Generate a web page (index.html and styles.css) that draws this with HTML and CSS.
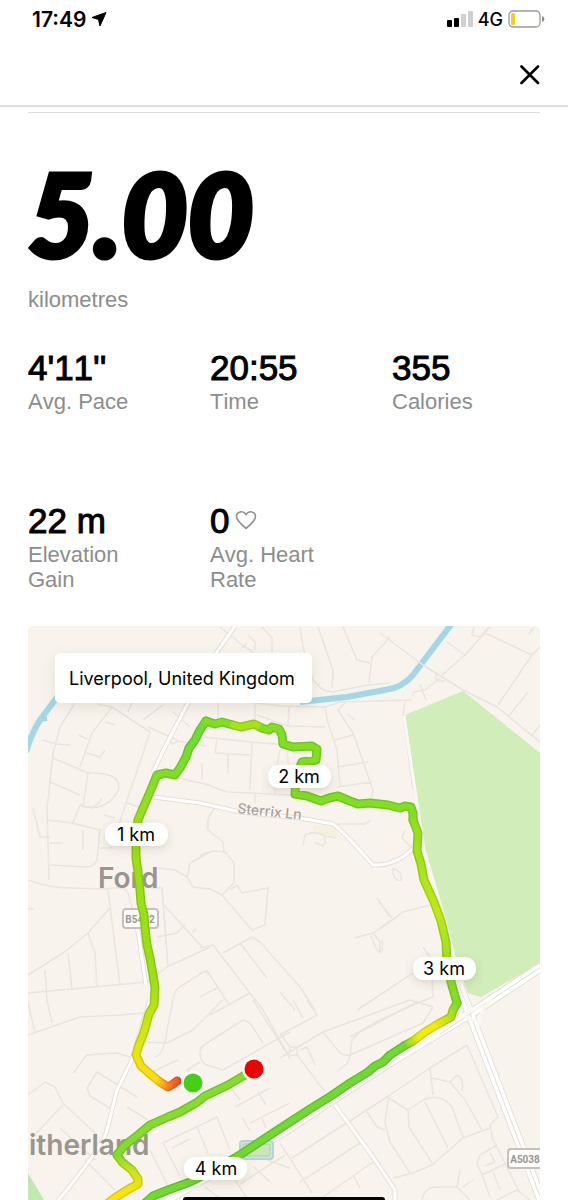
FILE: index.html
```html
<!DOCTYPE html>
<html lang="en">
<head>
    <meta charset="UTF-8">
    <meta name="viewport" content="width=device-width, initial-scale=1.0">
    <title>Run Details</title>
    <link rel="stylesheet" href="styles.css">
</head>
<body>
    <!-- Status bar -->
    <div class="status-bar">
        <div class="status-left">
            <span class="clock">17:49</span>
            <svg class="location-icon" width="16" height="16" viewBox="0 0 16 16"><path d="M15 1.500 L1 6.500 L7.500 8.500 L9 15 Z" stroke="#000" stroke-width="1" stroke-linejoin="round"/></svg>
        </div>
        <div class="status-right">
            <svg width="26" height="16" viewBox="0 0 26 16">
                <rect x="0" y="9" width="5" height="7" rx="1"/>
                <rect x="7" y="7" width="5" height="9" rx="1"/>
                <rect x="14" y="3" width="5" height="13" rx="1" fill="#cfcfcf"/>
                <rect x="21" y="0" width="5" height="16" rx="1" fill="#cfcfcf"/>
            </svg>
            <span class="network">4G</span>
            <svg width="37" height="18" viewBox="0 0 37 18">
                <rect x="1" y="1" width="31" height="16" rx="4" fill="#fff" stroke="#9c9c94" stroke-width="1.300"/>
                <rect x="3" y="3" width="4" height="12" rx="1.500" fill="#f5cd1f"/>
                <path d="M34 6 v6 q2.500 -1 2.500 -3 t-2.500 -3z" fill="#8a8a8a"/>
            </svg>
        </div>
    </div>

    <header>
        <button type="button" class="close-btn" aria-label="Close">
            <svg width="20" height="20" viewBox="0 0 20 20"><path d="M1.500 1.500 L18 18 M18 1.500 L1.500 18" stroke="#000" stroke-width="2.600" stroke-linecap="round"/></svg>
        </button>
    </header>

    <main class="container">
        <!-- Distance -->
        <section class="distance">
            <h1>5.00</h1>
            <p class="label">kilometres</p>
        </section>

        <!-- Run stats -->
        <section class="stats">
            <div class="stat">
                <div class="value">4'11''</div>
                <div class="label">Avg. Pace</div>
            </div>
            <div class="stat">
                <div class="value">20:55</div>
                <div class="label">Time</div>
            </div>
            <div class="stat">
                <div class="value">355</div>
                <div class="label">Calories</div>
            </div>
            <div class="stat">
                <div class="value">22 m</div>
                <div class="label">Elevation Gain</div>
            </div>
            <div class="stat">
                <div class="value">0
                    <svg class="heart" width="22" height="20" viewBox="0 0 22 20"><path d="M11 18.500 C8 15.500 1.500 11 1.500 6.500 C1.500 1.500 8 0 11 4.500 C14 0 20.500 1.500 20.500 6.500 C20.500 11 14 15.500 11 18.500Z" fill="none" stroke="#8d8d8d" stroke-width="1.600" stroke-linejoin="round"/></svg>
                </div>
                <div class="label">Avg. Heart Rate</div>
            </div>
        </section>

        <!-- Route map -->
        <section class="map">
            <svg class="map-canvas" viewBox="28 626 512 574">
                <defs>
                    <linearGradient id="startFade" gradientUnits="userSpaceOnUse" x1="181" y1="1080" x2="150" y2="1074">
                        <stop offset="0" stop-color="#e8452c"/>
                        <stop offset=".35" stop-color="#ff7a1f"/>
                        <stop offset=".75" stop-color="#ffdc10"/>
                    </linearGradient>
                    <linearGradient id="firstKm" gradientUnits="userSpaceOnUse" x1="0" y1="1074" x2="0" y2="980">
                        <stop offset="0" stop-color="#ffdc10"/>
                        <stop offset=".3" stop-color="#dfe80f"/>
                        <stop offset="1" stop-color="#9be016"/>
                    </linearGradient>
                    <linearGradient id="secondKm" gradientUnits="userSpaceOnUse" x1="0" y1="830" x2="0" y2="740">
                        <stop offset="0" stop-color="#a0e018"/>
                        <stop offset="1" stop-color="#6fdc33"/>
                    </linearGradient>
                    <linearGradient id="thirdKm" gradientUnits="userSpaceOnUse" x1="0" y1="820" x2="0" y2="1003">
                        <stop offset="0" stop-color="#8fe01c"/>
                        <stop offset=".5" stop-color="#c0e814"/>
                        <stop offset="1" stop-color="#7fdc28"/>
                    </linearGradient>
                    <linearGradient id="turn" gradientUnits="userSpaceOnUse" x1="457" y1="1003" x2="404" y2="1046">
                        <stop offset="0" stop-color="#7fdc28"/>
                        <stop offset=".45" stop-color="#f2ea0c"/>
                        <stop offset=".75" stop-color="#f2ea0c"/>
                        <stop offset="1" stop-color="#6fdc30"/>
                    </linearGradient>
                    <linearGradient id="lastKm" gradientUnits="userSpaceOnUse" x1="0" y1="1155" x2="0" y2="1192">
                        <stop offset="0" stop-color="#80dd2c"/>
                        <stop offset=".45" stop-color="#cfe417"/>
                        <stop offset="1" stop-color="#fbe30c"/>
                    </linearGradient>
                    <filter id="pillShadow" x="-30%" y="-50%" width="160%" height="220%">
                        <feDropShadow dx="0" dy="3" stdDeviation="4" flood-color="#5b4a3a" flood-opacity=".18"/>
                    </filter>
                    <g id="route" fill="none" stroke-linecap="round" stroke-linejoin="round">
                        <path stroke="url(#startFade)" d="M177 1081 L173 1084 168 1087 160 1082 150 1074"/>
                        <path stroke="url(#firstKm)" d="M150 1074 L141 1066 136 1055 139 1045 143 1035 146 1025 149 1014 154 1005 155 988 153 975 150 958 147 945 145 928 144 915 141 903 140 890 138 872 136 858 136 845 136 834"/>
                        <path stroke="url(#secondKm)" d="M136 834 L138 820 143 808 150 792 157 775 166 773 175 775 180 768 186 757 189 748 195 740 200 730 206 721"/>
                        <path stroke="#7fdf27" d="M206 721 L215 724 222 722 233 725"/>
                        <path stroke="#a6e41a" d="M233 725 L241 727 254 724 262 728"/>
                        <path stroke="#80df22" d="M262 728 L269 730 272 727 279 729 282 735 283 744 293 747 312 746 317 749 316 760 302 762 296 776 295 794 307 796 321 801 329 798 338 796 350 801 358 804 370 803 388 805 400 808 405 806 411 807 413 813 413 820"/>
                        <path stroke="url(#thirdKm)" d="M413 820 L418 833 417 851 421 864 424 880 434 902 441 921 446 942 447 965 451 982 457 1003"/>
                        <path stroke="url(#turn)" d="M457 1003 L453 1010 451 1017 438 1024 425 1032 413 1041 404 1046"/>
                        <path stroke="#71da32" d="M404 1046 L390 1055 383 1062 375 1066 368 1072 350 1083 331 1096 310 1109 290 1122 270 1135 252 1147 235 1158 216 1169 190 1182 168 1190 153 1196 144 1204"/>
                        <path stroke="#84dd2e" d="M250 1072 L228 1085 205 1096 196 1103 180 1112 168 1117 150 1125 138 1135 124 1146 117 1155"/>
                        <path stroke="url(#lastKm)" d="M117 1155 L122 1162 132 1170 138 1179 138 1184 127 1190 116 1197 108 1203"/>
                    </g>
                </defs>

                <rect x="28" y="626" width="512" height="574" fill="#f8f4ed"/>

                <!-- parks -->
                <path d="M405 715 L463 691 L540 753 V963 L481 997 L468 993 L452 950 L440 905 L424 850 L413 787Z" fill="#d1edba"/>
                <path d="M28 1173 L44 1200 H28Z" fill="#c4e5b4"/>
                <path d="M313 825 L336 827 L338 837 L314 833Z" fill="#f4f1dc"/>

                <!-- canal -->
                <g class="canal">
                    <path class="bank" d="M453 622 L413 675 Q402 688 385 690 L347 697 L300 702 M58 696 L40 720 Q32 732 26 752"/>
                    <path d="M453 622 L413 675 Q402 688 385 690 L347 697 L300 702 M58 696 L40 720 Q32 732 26 752 M40 719 L47 718"/>
                </g>

                <!-- side streets -->
                <path class="street" d="M75 703 L60 727 53 753 50 780 47 810 49 880
                    M112 707 L92 733 80 767 M42 740 L57 744 70 745 M53 758 L88 773 Q120 772 119 788 Q112 806 92 808 L80 805
                    M88 773 L83 807 M50 782 L80 795 M97 704 L112 707 L150 732 L138 768 L127 800 M163 705 L143 720 M148 727 L177 740 M87 753 L100 757 105 750
                    M105 722 L115 725 M79 735 L87 739 M133 700 L128 712 M173 777 L210 785 M202 763 V780 M173 712 L190 727
                    M168 736 L172 744 178 741 206 746 M127 803 L142 808"/>
                <path class="street" d="M300 627 L303 647 313 680 323 690 332 692 368 685 390 683 M318 627 L333 670 332 688 M343 627 L357 660 370 663
                    M390 637 L372 657 369 683 M220 627 L242 645 253 652 M262 627 L272 638 V652 M248 635 L255 642 V650 M242 648 L247 643
                    M240 701 L280 706 325 707 340 702 412 700 M255 703 V722 M218 703 V718 M257 715 L288 726 325 727 M289 707 L288 726
                    M325 708 L328 723 337 750 340 787 M345 703 L338 710 353 733 373 790 371 801 M335 740 L353 735 M337 767 L368 762 M337 787 L372 782
                    M347 714 L355 720 M202 737 L252 742 250 790 M217 738 L215 753 250 755 M228 755 V773 M252 742 L287 745
                    M202 783 L227 792 292 795 M287 747 L288 763 M280 750 L275 775 V793 M255 793 V803 M215 808 Q205 818 208 830"/>
                <path class="street" d="M380 633 L423 665 442 677 463 690 497 707 540 742 M442 675 L465 655 490 627 M447 642 L465 655
                    M483 632 L532 655 540 647 M532 655 L498 705 M528 692 L508 717 M540 725 L532 735 M534 627 L529 634
                    M474 627 L472 635 480 637 488 628 M440 678 L425 690 413 692 413 696 M420 684 L426 700 M405 702 L403 715 413 790 M436 672 V681 H445"/>
                <path class="street" d="M47 820 L72 823 100 830 97 860 Q94 867 85 867 L50 865 M50 843 H63 M83 830 V850 M33 808 L40 837 50 837 M80 805 L73 823
                    M80 805 Q95 812 102 798 M100 848 H113 M104 815 L115 818 M127 800 L118 827 M28 880 Q50 888 70 888 L107 889 Q125 885 128 893 L137 925
                    M108 890 L120 985 M110 908 L88 933 63 953 28 975 M88 933 L95 953 97 987 M68 953 L72 990 M45 970 L47 1000 52 1023
                    M28 993 L147 982 167 967 210 947 M150 888 H162 L168 967 M162 903 L202 947 M157 937 L177 933 185 925 M192 933 L196 928
                    M158 868 L175 870 187 877 190 863 210 852 M187 877 L193 887 210 889 M173 1000 Q174 990 180 987 L203 972 210 973 M28 909 H34"/>
                <path class="street" d="M208 820 V830 L223 842 224 852 M200 855 L213 851 225 852 234 863 234 883 222 895 210 889 200 888
                    M222 895 L252 930 265 925 268 888 242 893 237 885 230 890 M200 948 L213 945 263 1010 290 1058 M223 953 L252 937 260 942 300 987 315 1010
                    M240 943 L267 978 M280 992 L295 1010 M200 973 L207 971 228 1003 M200 997 L217 988 M210 1015 L250 993
                    M377 898 L390 917 M355 938 L373 933 390 922 400 914 M373 933 L380 942 380 952 377 950 371 936 M303 845 L305 835 Q315 830 325 836 V845 M315 843 L324 846 M325 836 L336 838
                    M337 824 L365 824 371 820 M357 1010 L380 995 410 975 418 971 432 980 433 997 420 1002 380 1020 350 1037 M380 903 L392 918 M380 928 L403 912 430 905
                    M423 947 L430 957 M393 868 Q403 872 401 880 Q393 882 393 868 M382 940 Q384 948 380 953 M405 830 L402 838 412 848"/>
                <path class="street" d="M28 1035 L80 1017 120 1015 143 1013 M28 1003 L35 1032 M148 1042 L167 1043 193 1030 223 1000 M173 1000 L167 1030 Q164 1055 155 1057
                    M73 1073 L87 1055 117 1053 130 1057 M200 1053 Q200 1046 207 1043 L243 1020 250 1023 263 1043 M200 1053 Q200 1062 207 1065 L223 1070 290 1032
                    M253 1000 L290 1058 M28 1095 L45 1082 55 1087 63 1103 97 1135 M63 1105 L30 1140 M137 1097 L97 1072 87 1088 90 1096 113 1110 M127 1107 L148 1120
                    M178 1060 L145 1075 M163 1143 L217 1117 230 1150 M197 1127 L208 1153 M163 1143 L180 1176 M172 1148 L190 1139 M235 1107 L270 1088 M242 1117 L250 1131
                    M250 1123 L290 1103 M262 1118 L266 1128 M258 1092 L266 1105 M205 1187 L222 1200 M232 1175 L248 1200 M254 1167 L270 1182 M267 1160 L290 1168 M240 1184 L285 1155
                    M85 1160 L115 1190 M150 1150 L170 1190 M60 1128 L95 1160 M228 1085 L240 1100 M200 1062 L187 1070 193 1074"/>
                <path class="street" d="M280 1035 L317 1015 307 1000 M293 1000 L303 1018 M280 1058 L293 1050 323 1032 410 1000 433 1007 M323 1032 L340 1053 Q344 1056 350 1055 L423 1023 433 1007
                    M350 1055 L352 1040 360 1032 417 1002 M350 1055 L348 1063 337 1071 M280 1033 L290 1047 M297 1055 L325 1092 M300 1050 L307 1047 315 1065
                    M290 1047 H297 V1055 H289Z M467 1045 L430 1068 387 1097 292 1158 M467 1045 L498 1117 490 1125 493 1140 520 1193
                    M430 1068 L433 1095 M432 1078 L450 1082 457 1075 Q464 1078 462 1091 M450 1082 L465 1100 482 1130 M387 1097 L408 1110 423 1100 Q440 1092 452 1107 L463 1137
                    M425 1102 L448 1148 M408 1110 L409 1127 432 1163 M388 1100 L385 1123 390 1142 410 1173 M393 1178 L413 1173 432 1165 463 1138 490 1128
                    M367 1112 L377 1127 385 1130 M360 1143 L300 1182 M373 1162 L323 1197 M280 1143 L312 1193 M353 1175 L360 1188
                    M482 1175 L477 1163 480 1155 497 1145 M482 1175 L507 1163 M490 1153 L495 1162 485 1166 M482 1175 L490 1197 M493 1172 L500 1190
                    M422 1200 Q424 1187 437 1187 H457 L470 1200 M457 1187 L460 1170 M463 1187 L473 1180 M497 1200 L517 1190 530 1200"/>

                <!-- main roads -->
                <g class="road-case">
                    <path d="M235 626 L217 652 188 703 167 743 153 772 M153 797 L200 803 240 812 300 818 333 824 Q342 830 373 865 Q388 866 403 857 L414 848"/>
                    <path d="M137 925 L146 985 M150 1000 L137 1043 132 1060 117 1090 107 1130 Q104 1145 57 1202 M335 1105 L373 1157 395 1190 V1200"/>
                </g>
                <g class="road">
                    <path d="M235 626 L217 652 188 703 167 743 153 772 M153 797 L200 803 240 812 300 818 333 824 Q342 830 373 865 Q388 866 403 857 L414 848"/>
                    <path d="M137 925 L146 985 M150 1000 L137 1043 132 1060 117 1090 107 1130 Q104 1145 57 1202 M335 1105 L373 1157 395 1190 V1200"/>
                </g>
                <g class="highway-case">
                    <path d="M541 967 L473 1012 390 1062 280 1134 187 1188 160 1204 M459 985 L480 1040 543 1204"/>
                </g>
                <g class="highway">
                    <path d="M541 967 L473 1012 390 1062 280 1134 187 1188 160 1204 M459 985 L480 1040 543 1204"/>
                </g>
                <path class="lane" d="M541 967 L473 1012 440 1034 M459 985 L480 1040 543 1204"/>
                <path class="ramp" d="M404 716 L415 790 424 850 442 910 455 960 470 1012 M478 1030 Q478 1008 493 1000 M455 1012 L478 1022 M448 1022 L482 1006"/>

                <!-- place names -->
                <text class="place" x="98" y="888">Ford</text>
                <text class="place" x="29" y="1155">itherland</text>
                <text class="street-name" transform="translate(237 813) rotate(6)">Sterrix Ln</text>

                <!-- road shields -->
                <g class="shield">
                    <rect x="123" y="909" width="35" height="19" rx="3"/>
                    <text x="140" y="923">B5422</text>
                    <rect x="508" y="1149" width="40" height="19" rx="3"/>
                    <text x="525" y="1163">A5038</text>
                </g>
                <rect x="240" y="1141" width="33" height="18" rx="3" fill="#d5e8c9" stroke="#b4d3dc" stroke-width="2"/>
                <rect x="243" y="1144" width="27" height="12" rx="1" fill="#cfe3bd" stroke="#a5cdb8"/>

                <!-- run -->
                <use href="#route" class="route-edge"/>
                <use href="#route" class="route-line"/>
                <circle cx="193" cy="1083" r="12" fill="#fff" opacity=".85"/>
                <circle cx="193" cy="1083" r="9.500" fill="#45d014"/>
                <circle cx="254" cy="1069" r="12" fill="#fff" opacity=".85"/>
                <circle cx="254" cy="1069" r="9.500" fill="#f20000"/>

                <!-- kilometre markers -->
                <g class="marker">
                    <rect x="105" y="823" width="63" height="23" rx="11"/>
                    <text x="136" y="841">1 km</text>
                    <rect x="268" y="765" width="63" height="23" rx="11"/>
                    <text x="299" y="783">2 km</text>
                    <rect x="413" y="957" width="63" height="23" rx="11"/>
                    <text x="444" y="975">3 km</text>
                    <rect x="184" y="1157" width="63" height="23" rx="11"/>
                    <text x="216" y="1175">4 km</text>
                </g>
            </svg>
            <div class="map-title">Liverpool, United Kingdom</div>
        </section>
    </main>

    <div class="home-bar"></div>
</body>
</html>
```
FILE: styles.css
```css
body {
    font-family: "Liberation Sans", Arial, sans-serif;
    background-color: #ffffff;
    color: #000000;
    margin: 0;
    padding: 0;
}

h1, p {
    margin: 0;
}

/* Status bar */
.status-bar {
    display: flex;
    justify-content: space-between;
    align-items: center;
    height: 38px;
    padding: 0 23px 0 32px;
    font-family: Inter, sans-serif;
}

.status-left, .status-right {
    display: flex;
    align-items: center;
    gap: 5px;
}

.clock {
    font-size: 21px;
    font-weight: 600;
}

.network {
    font-size: 18px;
    font-weight: 500;
}

/* Header */
header {
    display: flex;
    justify-content: flex-end;
    align-items: center;
    height: 67px;
    padding: 0 28px;
    border-bottom: 2px solid #dedede;
}

.close-btn {
    display: flex;
    background: none;
    border: none;
    padding: 6px 0 0;
    cursor: pointer;
}

.container {
    padding: 5px 28px 0;
}

/* Distance */
.distance {
    border-top: 1px solid #dcdcdc;
    padding-top: 35px;
    margin-bottom: 36px;
}

h1 {
    font-family: Lato, sans-serif;
    font-size: 114px;
    font-style: italic;
    font-weight: 900;
    line-height: 130px;
    margin-bottom: 9px;
    -webkit-text-stroke: 5px #000000;
}

.label {
    color: #8d8d8d;
    font-size: 22px;
    line-height: 25px;
}

/* Stats */
.stats {
    display: grid;
    grid-template-columns: repeat(3, 1fr);
    gap: 87px 34px;
    margin-bottom: 34px;
    font-kerning: none;
}

.stat {
    padding-right: 16px;
}

.value {
    font-size: 35px;
    line-height: 40px;
    margin-bottom: 1px;
    -webkit-text-stroke: 1px #000000;
}

.heart {
    margin-left: -4px;
    vertical-align: 3px;
}

/* Map */
.map {
    position: relative;
    border-radius: 5px 5px 0 0;
    overflow: hidden;
}

.map-canvas {
    display: block;
    width: 100%;
    font-family: Inter, sans-serif;
}

.map-title {
    position: absolute;
    top: 27px;
    left: 27px;
    background-color: #ffffff;
    padding: 1px 17px 0 14px;
    border-radius: 5px;
    box-shadow: 0 4px 14px rgba(90, 70, 50, 0.12);
    font-family: Inter, sans-serif;
    font-size: 18px;
    line-height: 49px;
}

.canal path {
    fill: none;
    stroke: #a6d6e5;
    stroke-width: 6;
}

.canal .bank {
    stroke: #eef5f2;
    stroke-width: 10;
}

.street {
    fill: none;
    stroke: #e9e4de;
    stroke-width: 1.5;
    stroke-linejoin: round;
}

.road-case, .road, .highway-case, .highway, .lane, .ramp {
    fill: none;
    stroke-linejoin: round;
}

.road-case {
    stroke: #e4dfd8;
    stroke-width: 5;
}

.road {
    stroke: #ffffff;
    stroke-width: 3;
}

.highway-case {
    stroke: #e4dfd9;
    stroke-width: 10;
}

.highway {
    stroke: #ffffff;
    stroke-width: 8;
}

.lane {
    stroke: #e0dbd5;
    stroke-width: 1;
}

.ramp {
    stroke: #faf8f5;
    stroke-width: 3;
}

.place {
    fill: #99958f;
    font-size: 28px;
    font-weight: 600;
}

.street-name {
    fill: #a8a29c;
    font-size: 14px;
    font-weight: 500;
}

.shield rect {
    fill: #fdfcfa;
    stroke: #c4c1bd;
    stroke-width: 2;
}

.shield text {
    fill: #999693;
    font-family: Roboto, sans-serif;
    font-size: 10px;
    font-weight: 700;
    text-anchor: middle;
}

.route-edge {
    stroke-width: 9px;
    filter: brightness(0.88);
}

.route-line {
    stroke-width: 6px;
}

.marker rect {
    fill: #ffffff;
    filter: url(#pillShadow);
}

.marker text {
    font-size: 18px;
    text-anchor: middle;
}

.home-bar {
    position: fixed;
    bottom: 0;
    left: 50%;
    width: 202px;
    height: 3px;
    margin-left: -101px;
    background-color: #000000;
    border-radius: 3px 3px 0 0;
}
```
